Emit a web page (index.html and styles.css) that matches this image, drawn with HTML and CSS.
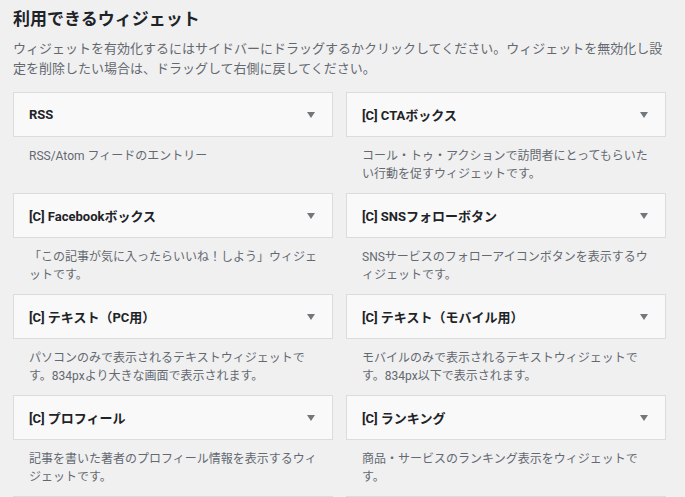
FILE: index.html
```html
<!DOCTYPE html>
<html lang="ja">
<head>
<meta charset="utf-8">
<title>利用できるウィジェット</title>
<link rel="stylesheet" href="styles.css">
</head>
<body>
<div class="page">
  <h2 class="heading">利用できるウィジェット</h2>
  <p class="intro">ウィジェットを有効化するにはサイドバーにドラッグするかクリックしてください。ウィジェットを無効化し設定を削除したい場合は、ドラッグして右側に戻してください。</p>
  <div class="widget-list">
    <div class="widget">
      <div class="widget-top"><span class="widget-title">RSS</span><span class="arrow"></span></div>
      <p class="widget-desc">RSS/Atom フィードのエントリー</p>
    </div>
    <div class="widget">
      <div class="widget-top"><span class="widget-title">[C] CTAボックス</span><span class="arrow"></span></div>
      <p class="widget-desc">コール・トゥ・アクションで訪問者にとってもらいたい行動を促すウィジェットです。</p>
    </div>
    <div class="widget">
      <div class="widget-top"><span class="widget-title">[C] Facebookボックス</span><span class="arrow"></span></div>
      <p class="widget-desc">「この記事が気に入ったらいいね！しよう」ウィジェットです。</p>
    </div>
    <div class="widget">
      <div class="widget-top"><span class="widget-title">[C] SNSフォローボタン</span><span class="arrow"></span></div>
      <p class="widget-desc">SNSサービスのフォローアイコンボタンを表示するウィジェットです。</p>
    </div>
    <div class="widget">
      <div class="widget-top"><span class="widget-title">[C] テキスト（PC用）</span><span class="arrow"></span></div>
      <p class="widget-desc">パソコンのみで表示されるテキストウィジェットです。834pxより大きな画面で表示されます。</p>
    </div>
    <div class="widget">
      <div class="widget-top"><span class="widget-title">[C] テキスト（モバイル用）</span><span class="arrow"></span></div>
      <p class="widget-desc">モバイルのみで表示されるテキストウィジェットです。834px以下で表示されます。</p>
    </div>
    <div class="widget">
      <div class="widget-top"><span class="widget-title">[C] プロフィール</span><span class="arrow"></span></div>
      <p class="widget-desc">記事を書いた著者のプロフィール情報を表示するウィジェットです。</p>
    </div>
    <div class="widget">
      <div class="widget-top"><span class="widget-title">[C] ランキング</span><span class="arrow"></span></div>
      <p class="widget-desc">商品・サービスのランキング表示をウィジェットです。</p>
    </div>
    <div class="widget">
      <div class="widget-top"><span class="widget-title">[C] 人気記事</span><span class="arrow"></span></div>
      <p class="widget-desc">人気記事リストをサムネイルつきで表示するウィジェットです。</p>
    </div>
    <div class="widget">
      <div class="widget-top"><span class="widget-title">[C] 新着記事</span><span class="arrow"></span></div>
      <p class="widget-desc">新着記事リストをサムネイルつきで表示するウィジェットです。</p>
    </div>
  </div>
</div>
</body>
</html>
```

FILE: styles.css
```css
html, body {
  margin: 0;
  padding: 0;
  background: #f0f0f1;
}
body {
  font-family: Roboto, "Noto Sans CJK JP", sans-serif;
  color: #1d2327;
  font-size: 13px;
}
.page {
  padding: 7px 13px 0 13px;
}
.heading {
  margin: 0;
  font-size: 17px;
  line-height: 24px;
  font-weight: 700;
  color: #1d2327;
}
.intro {
  margin: 8px 0 0 0;
  font-size: 13px;
  line-height: 20px;
  color: #646970;
}
.widget-list {
  margin-top: 13px;
  display: grid;
  grid-template-columns: 320px 320px;
  column-gap: 13px;
}
.widget {
  height: 101px;
}
.widget-top {
  box-sizing: border-box;
  height: 45px;
  background: #f9f9f9;
  border: 1px solid #dcdcde;
  display: flex;
  align-items: center;
  justify-content: space-between;
  padding: 0 17px 0 15px;
}
.widget-title {
  font-weight: 700;
  font-size: 13px;
  color: #1d2327;
}
.arrow {
  width: 0;
  height: 0;
  border-left: 4px solid transparent;
  border-right: 4px solid transparent;
  border-top: 6px solid #72777c;
  margin-top: 1px;
}
.widget-desc {
  margin: 0;
  padding: 10px 15px 0 16px;
  font-size: 12px;
  line-height: 18px;
  color: #646970;
}
```
